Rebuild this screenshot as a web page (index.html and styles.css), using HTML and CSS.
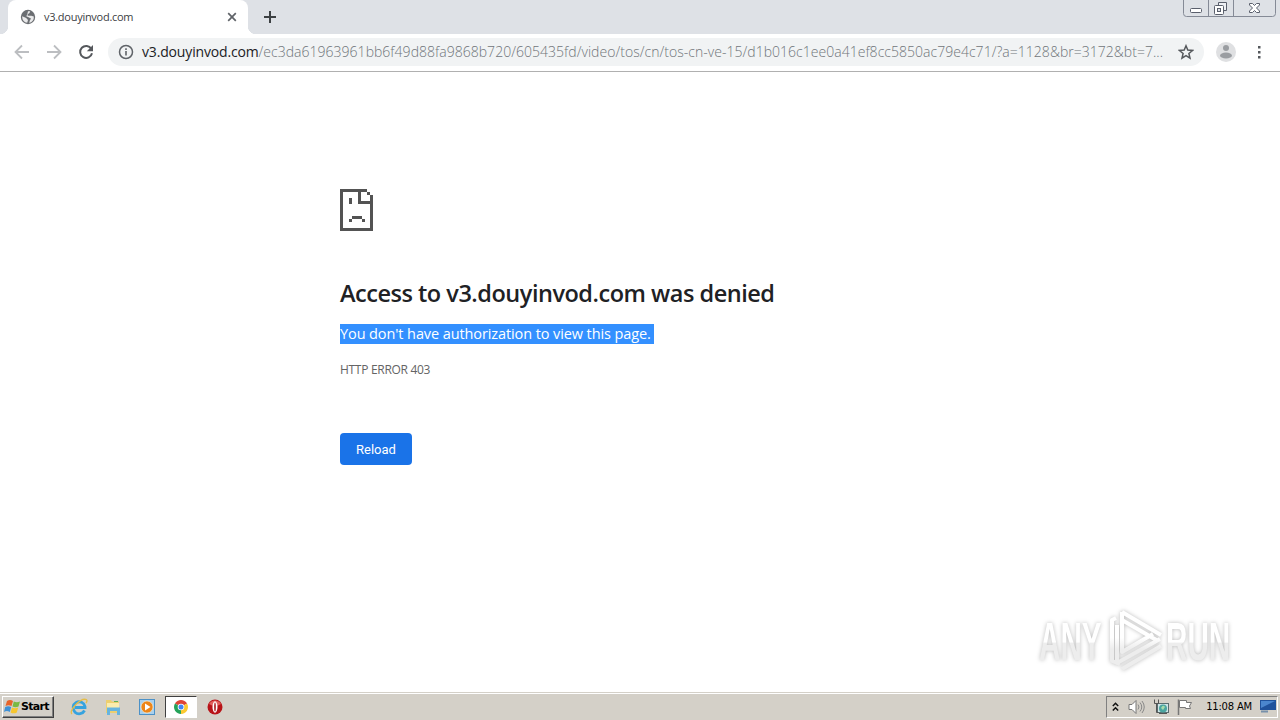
FILE: index.html
```html
<!DOCTYPE html>
<html lang="en">
<head>
    <meta charset="UTF-8">
    <meta name="viewport" content="width=device-width, initial-scale=1.0">
    <title>v3.douyinvod.com</title>
    <link rel="stylesheet" href="styles.css">
</head>
<body>
    <div class="tab-strip">
        <div class="tab">
            <svg class="favicon" width="16" height="16" viewBox="0 0 16 16">
                <circle cx="8" cy="8" r="7.2" fill="#6b6e72"/>
                <path d="M2.2 7.2l4 1.800 1.800 2-.8 2.800C4.200 13.300 2 11 2.200 7.200zM8 2.300h2.200L9.500 4 7.700 5.200v1.600h3.600l2.500.8A6 6 0 0 1 9.300 13.900l.4-2.100 1.300-2.200-3-1.600-1.700-.8 1-2z" fill="#fff" opacity=".85"/>
            </svg>
            <span class="tab-title">v3.douyinvod.com</span>
            <svg class="tab-close" width="10" height="10" viewBox="0 0 10 10">
                <path d="M1.200 1.200l7.600 7.600M8.800 1.200L1.200 8.800" stroke="#5f6368" stroke-width="1.700"/>
            </svg>
        </div>
        <svg class="new-tab" width="12" height="12" viewBox="0 0 12 12">
            <path d="M6 0v12M0 6h12" stroke="#3c4043" stroke-width="2"/>
        </svg>
        <div class="window-buttons">
            <svg width="93" height="17" viewBox="0 0 93 17">
                <path d="M.5 0v13.500q0 3 3 3h86q3 0 3-3V0M25.500 0v16.500M50.500 0v16.500" fill="none" stroke="#858a96"/>
                <rect x="7.500" y="8.500" width="11" height="4" rx="1" fill="#fff" stroke="#5a5f6c"/>
                <path d="M35.500 5.500v-3h8v8h-3" fill="#eef0f4" stroke="#5a5f6c"/>
                <rect x="31.500" y="5.500" width="9" height="9" rx="1" fill="#fff" stroke="#5a5f6c"/>
                <rect x="34.500" y="8.500" width="3" height="3" fill="#dee1e6" stroke="#5a5f6c"/>
                <path d="M66.500 3.500h3l2 2 2-2h3v1.500l-3 3 3 3v1.500h-3l-2-2-2 2h-3v-1.500l3-3-3-3z" fill="#fff" stroke="#5a5f6c"/>
            </svg>
        </div>
    </div>

    <div class="toolbar">
        <svg class="nav" width="16" height="16" viewBox="0 0 16 16">
            <path d="M15 8H2M8 1.500L1.500 8 8 14.500" fill="none" stroke="#bcbec1" stroke-width="1.800"/>
        </svg>
        <svg class="nav" width="16" height="16" viewBox="0 0 16 16">
            <path d="M1 8h13M8 1.500L14.500 8 8 14.500" fill="none" stroke="#bcbec1" stroke-width="1.800"/>
        </svg>
        <svg class="nav" width="16" height="16" viewBox="0 0 16 16">
            <path d="M13.300 4.800A6 6 0 1 0 14 9.300" fill="none" stroke="#55585c" stroke-width="2"/>
            <path d="M15 1v6.200H8.800z" fill="#55585c"/>
        </svg>
        <div class="address-bar">
            <svg class="info" width="16" height="16" viewBox="0 0 16 16">
                <circle cx="8" cy="8" r="6.500" fill="none" stroke="#5f6368" stroke-width="1.500"/>
                <path d="M8 7v4.500M8 4.200v1.700" stroke="#5f6368" stroke-width="1.600"/>
            </svg>
            <span class="url-host">v3.douyinvod.com</span><span class="url-path">/ec3da61963961bb6f49d88fa9868b720/605435fd/video/tos/cn/tos-cn-ve-15/d1b016c1ee0a41ef8cc5850ac79e4c71/?a=1128&amp;br=3172&amp;bt=7...</span>
            <svg class="star" width="16" height="16" viewBox="0 0 16 16">
                <path d="M8 1.800l1.800 4.300 4.700.4-3.600 3 1.100 4.600L8 11.700 4 14.100l1.100-4.600-3.600-3 4.700-.4z" fill="none" stroke="#55585c" stroke-width="1.500"/>
            </svg>
        </div>
        <svg class="avatar" width="20" height="20" viewBox="0 0 20 20">
            <circle cx="10" cy="10" r="10" fill="#dfe0e2"/>
            <circle cx="10" cy="6" r="3" fill="#9a9da1"/>
            <ellipse cx="10" cy="13.500" rx="6" ry="3" fill="#9a9da1"/>
        </svg>
        <svg class="menu" width="4" height="14" viewBox="0 0 4 14">
            <path d="M1 1h2.500v2.500H1zM1 6h2.500v2.500H1zM1 11h2.500v2.500H1z" fill="#55585c"/>
        </svg>
    </div>

    <main class="page">
        <svg class="sad-page" width="33" height="42" viewBox="0 0 33 42" shape-rendering="crispEdges">
            <path fill="#535353" d="M0 0h27v3H3v36h27V15H18V3h3v9h9V9h3v33H0zM27 3h3v3h-3zM30 6h3v3h-3zM9 9h3v6H9zM12 27h10v3H12zM9 30h3v3H9zM22 30h3v3h-3z"/>
        </svg>
        <h1>Access to v3.douyinvod.com was denied</h1>
        <p class="message"><span>You don't have authorization to view this page.&nbsp;</span></p>
        <div class="error-code">HTTP ERROR 403</div>
        <button class="reload">Reload</button>

        <div class="watermark">
            <div class="mark"><span>ANY</span></div>
            <svg width="58" height="64" viewBox="0 0 58 64">
                <defs>
                    <linearGradient id="fade" x1="0" y1="0" x2="0" y2="1">
                        <stop offset=".45" stop-color="#fff"/>
                        <stop offset=".65" stop-color="#ededed"/>
                    </linearGradient>
                </defs>
                <g fill="none" stroke="url(#fade)" stroke-width="4" stroke-linejoin="round">
                    <path d="M14 4l39 23M14 4v40l31-18M14 4v8l36 21M8 10L4 12v41l8 3M9 17v38l43-24M14 61l39-23"/>
                </g>
            </svg>
            <div class="mark mark-run"><span>RUN</span></div>
        </div>
    </main>

    <div class="taskbar">
        <div class="start">
            <svg width="17" height="16" viewBox="0 0 17 16">
                <path d="M3 2q3-2 6 0L7.500 7q-3-1.700-6 0z" fill="#e8642a"/>
                <path d="M9.800 2.500q3 1.500 6.200 0L14.500 7.500q-3 1.500-6 0z" fill="#79b943"/>
                <path d="M1.200 8q3-1.700 6 0L5.800 13q-3-2-5.800 0z" fill="#3f91d6"/>
                <path d="M8 8.500q3 1.500 6.200 0L12.800 13.500q-3 1.700-6.200 0z" fill="#f6c62f"/>
            </svg>
            <span>Start</span>
        </div>
        <div class="launcher">
            <svg width="18" height="18" viewBox="0 0 18 18">
                <path d="M14.500 12.500A6 6 0 1 1 15 8.500v1H5" fill="none" stroke="#36a3df" stroke-width="2.800"/>
                <path d="M2 16C-2 13 11-1 16.500 1.700q1.200 1-.5 3.500" fill="none" stroke="#e5bd48" stroke-width="1.300"/>
            </svg>
        </div>
        <div class="launcher">
            <svg width="16" height="16" viewBox="0 0 16 16">
                <path d="M1 1h5l1 1.500h7V14H1z" fill="#edcf70"/>
                <path d="M2 4h12v5H2z" fill="#faecae"/>
                <path d="M2 8.500h13V16h-3v-4H5v4H2z" fill="#67b4df"/>
                <path d="M9 2.500h4" stroke="#5aaf5a"/>
            </svg>
        </div>
        <div class="launcher">
            <svg width="16" height="16" viewBox="0 0 16 16">
                <rect x=".5" y=".5" width="15" height="15" fill="#a9d0ed" stroke="#4c91c7"/>
                <circle cx="8" cy="8" r="6" fill="#ed8518" stroke="#fff1d4" stroke-width=".6"/>
                <path d="M6 4.500l5.500 3.500L6 11.500z" fill="#fff"/>
            </svg>
        </div>
        <div class="launcher active">
            <svg width="14" height="14" viewBox="0 0 14 14">
                <path d="M7 7L.940 3.500A7 7 0 0 1 13.060 3.500z" fill="#df4436"/>
                <path d="M7 7l6.060-3.500A7 7 0 0 1 7 14z" fill="#fbc931"/>
                <path d="M7 7v7A7 7 0 0 1 .940 3.500z" fill="#25a35a"/>
                <circle cx="7" cy="7" r="3.300" fill="#fff"/>
                <circle cx="7" cy="7" r="2.500" fill="#4285f4"/>
            </svg>
        </div>
        <div class="launcher">
            <svg width="16" height="16" viewBox="0 0 16 16">
                <circle cx="8" cy="8" r="7.500" fill="#b81318"/>
                <path d="M2 5a7 7 0 0 1 12 0q-6 4-12 0z" fill="#e2605d"/>
                <ellipse cx="8" cy="8" rx="2.500" ry="5.800" fill="#fff"/>
                <ellipse cx="8" cy="8" rx=".8" ry="4.500" fill="#a61014"/>
            </svg>
        </div>

        <div class="tray">
            <svg class="chevrons" width="7" height="10" viewBox="0 0 7 10">
                <path d="M.8 4l2.700-2.700L6.200 4M.8 8.500l2.700-2.700 2.700 2.700" fill="none" stroke="#111" stroke-width="1.500"/>
            </svg>
            <svg width="17" height="16" viewBox="0 0 17 16">
                <path d="M1 5.500h3l4-4v13l-4-4H1z" fill="#fff" stroke="#777"/>
                <path d="M10 5.500q2 2.500 0 5M12 3.500q3.500 4.500 0 9M14 2q4.500 6 0 12" fill="none" stroke="#888"/>
            </svg>
            <svg width="16" height="16" viewBox="0 0 16 16">
                <rect x="4.500" y="4.500" width="11" height="9" fill="#cfe5e7" stroke="#5a6d70"/>
                <circle cx="10" cy="9.500" r="4" fill="#4ba5a0"/>
                <path d="M8 9q2-4 4-1l-2 3z" fill="#a8dcab"/>
                <path d="M1.500.500v4h4v-4M3.500 4.500v9h2M6 14.500h8" fill="none" stroke="#555"/>
            </svg>
            <svg width="16" height="16" viewBox="0 0 16 16">
                <path d="M1.500.500V16" stroke="#777" stroke-width="1.500"/>
                <path d="M2.500 1.500h7v2h5l-2 3.500 1 2.500h-5v-1h-6z" fill="#fff" stroke="#777"/>
            </svg>
            <span class="clock">11:08 AM</span>
            <svg class="desktop" width="16" height="13" viewBox="0 0 16 13">
                <path d="M0 0h16v10H0z" fill="#20529c"/>
                <path d="M1 1h14L1 8z" fill="#4b86ce"/>
                <path d="M1 11.500h7" stroke="#7790aa" stroke-width="2"/>
            </svg>
        </div>
    </div>
</body>
</html>
```

FILE: styles.css
```css
* {
    box-sizing: border-box;
}

body {
    margin: 0;
    height: 720px;
    display: flex;
    flex-direction: column;
    overflow: hidden;
    background: #fff;
    font-family: 'Open Sans', 'Noto Sans', sans-serif;
}

svg {
    display: block;
    flex: none;
}

/* Tabs */
.tab-strip {
    display: flex;
    height: 34px;
    padding-left: 8px;
    background: #dee1e6;
}

.tab {
    position: relative;
    display: flex;
    align-items: center;
    width: 240px;
    padding: 0 11px 0 12px;
    background: #fff;
    border-radius: 8px 8px 0 0;
}

.tab::before,
.tab::after {
    content: "";
    position: absolute;
    bottom: 0;
    width: 8px;
    height: 8px;
}

.tab::before {
    left: -8px;
    background: radial-gradient(circle at 0 0, transparent 8px, #fff 8.500px);
}

.tab::after {
    right: -8px;
    background: radial-gradient(circle at 100% 0, transparent 8px, #fff 8.500px);
}

.tab-title {
    flex: 1;
    margin: -2px 0 0 8px;
    font-size: 11px;
    letter-spacing: -0.27px;
    color: #3c4043;
    white-space: nowrap;
}

.new-tab {
    margin: 11px 0 0 16px;
}

.window-buttons {
    margin: 0 4px 0 auto;
}

/* Toolbar */
.toolbar {
    display: flex;
    align-items: center;
    height: 38px;
    padding: 0 19px 2px 14px;
    border-bottom: 1px solid #b0b0b0;
}

.nav {
    margin-right: 16px;
}

.address-bar {
    display: flex;
    align-items: center;
    width: 1096px;
    height: 28px;
    margin-left: -2px;
    padding: 0 10px;
    border-radius: 14px;
    background: #f1f3f4;
    font-size: 14px;
    font-weight: 300;
    white-space: nowrap;
}

.url-host {
    width: 116.500px;
    margin-left: 8px;
    color: #202124;
    font-weight: 400;
    letter-spacing: -0.16px;
}

.url-path {
    color: #70757a;
    letter-spacing: 0.025px;
}

.star {
    margin-left: auto;
}

.avatar {
    margin-left: 12px;
}

.menu {
    margin-left: auto;
}

/* Error page */
.page {
    position: relative;
    flex: 1;
    display: flex;
    flex-direction: column;
    align-items: flex-start;
    padding: 117px 0 0 340px;
}

h1 {
    margin: 45px 0 0;
    font-size: 23.500px;
    font-weight: 600;
    line-height: 34px;
    letter-spacing: -0.48px;
    color: #202124;
    white-space: nowrap;
}

.message {
    margin: 14px 0 0;
    height: 20px;
    font-size: 14.500px;
    line-height: 20px;
    letter-spacing: -0.1px;
    white-space: nowrap;
}

.message span {
    display: block;
    background: #3390ff;
    color: #fff;
}

.error-code {
    margin-top: 17px;
    font-size: 12px;
    line-height: 18px;
    letter-spacing: -0.3px;
    color: #646464;
}

.reload {
    width: 72px;
    height: 32px;
    margin-top: 54px;
    padding: 0;
    border: 0;
    border-radius: 4px;
    background: #1a73e8;
    color: #fff;
    font-family: Roboto, sans-serif;
    font-size: 13px;
}

.watermark {
    position: absolute;
    right: 49px;
    bottom: 20px;
    display: flex;
    align-items: center;
    filter: drop-shadow(0 0 2px #bbb);
}

.mark {
    width: 69px;
}

.mark span {
    display: block;
    width: max-content;
    font-family: 'Liberation Sans', sans-serif;
    font-size: 53px;
    font-weight: bold;
    line-height: 64px;
    color: transparent;
    background: linear-gradient(#fff 50%, #ededed 52%);
    background-clip: text;
    -webkit-background-clip: text;
    transform: translateY(2px) scaleX(0.56);
    transform-origin: left;
}

.mark-run {
    width: 65px;
}

/* Taskbar */
.taskbar {
    display: flex;
    align-items: center;
    height: 28px;
    padding: 0 2px;
    background: #d4d0c8;
    border-top: 1px solid #d4d0c8;
    box-shadow: inset 0 1px #fff;
}

.start {
    display: flex;
    align-items: center;
    width: 52px;
    height: 22px;
    margin-right: 9px;
    padding-left: 1px;
    border: 1px solid;
    border-color: #fff #404040 #404040 #fff;
    box-shadow: inset -1px -1px #808080;
    font-family: 'DejaVu Sans', sans-serif;
    font-size: 11px;
    font-weight: bold;
    letter-spacing: -0.7px;
}

.launcher {
    display: flex;
    align-items: center;
    justify-content: center;
    width: 32px;
    height: 22px;
    margin-right: 2px;
}

.launcher.active {
    background: #fff;
    border: 1px solid;
    border-color: #404040 #fff #fff #404040;
}

.tray {
    display: flex;
    align-items: center;
    gap: 8px;
    width: 172px;
    height: 22px;
    margin-left: auto;
    padding: 0 1px 0 5px;
    border: 1px solid;
    border-color: #808080 #fff #fff #808080;
}

.chevrons {
    margin-right: 1px;
}

.clock {
    margin-left: auto;
    font-family: 'DejaVu Sans', sans-serif;
    font-size: 10px;
    letter-spacing: -0.2px;
    white-space: nowrap;
}
```
